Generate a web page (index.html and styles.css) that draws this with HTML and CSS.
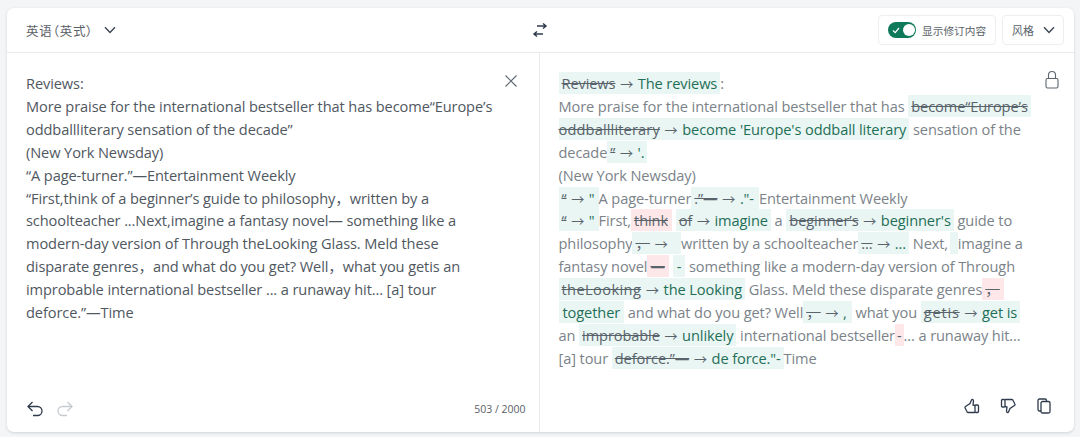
FILE: index.html
```html
<!DOCTYPE html>
<html lang="zh">
<head>
<meta charset="utf-8">
<title>修订</title>
<link rel="stylesheet" href="styles.css">
</head>
<body>
<main class="card">
  <header class="top">
    <div class="top-left">
      <span class="lang">英语（英式）</span>
      <svg class="chev" width="12" height="8" viewBox="0 0 12 8"><path d="M1 1.2 6 6.4 11 1.2" fill="none" stroke="#3c4654" stroke-width="1.4"/></svg>
    </div>
    <div class="top-mid">
      <svg width="16" height="16" viewBox="0 0 16 16" fill="none" stroke="#2f3b4c" stroke-width="1.5"><path d="M5 4h9M11 1.500 14 4 11 6.500"/><path d="M11 12H2M5 9.500 2 12 5 14.500"/></svg>
    </div>
    <div class="top-right">
      <div class="btn toggle-btn">
        <span class="toggle"><svg class="tick" width="8" height="7" viewBox="0 0 8 7"><path d="M1 3.500 3.200 5.600 7 1" fill="none" stroke="#fff" stroke-width="1.200"/></svg><span class="knob"></span></span>
        <span class="btn-label">显示修订内容</span>
      </div>
      <div class="btn style-btn">
        <span class="btn-label big">风格</span>
        <svg class="chev2" width="12" height="8" viewBox="0 0 12 8"><path d="M1 1.200 6 6.400 11 1.200" fill="none" stroke="#3c4654" stroke-width="1.400"/></svg>
      </div>
    </div>
  </header>
  <div class="panes">
    <section class="pane left">
      <div class="text">
        <div>Reviews:</div>
        <div>More praise for the international bestseller that has become“Europe’s</div>
        <div>oddballliterary sensation of the decade”</div>
        <div>(New York Newsday)</div>
        <div>“A page-turner.”—Entertainment Weekly</div>
        <div>“First,think of a beginner’s guide to philosophy，written by a</div>
        <div>schoolteacher ...Next,imagine a fantasy novel— something like a</div>
        <div>modern-day version of Through theLooking Glass. Meld these</div>
        <div>disparate genres，and what do you get? Well，what you getis an</div>
        <div>improbable international bestseller ... a runaway hit... [a] tour</div>
        <div>deforce.”—Time</div>
      </div>
      <svg class="close" width="14" height="14" viewBox="0 0 14 14"><path d="M1.500 1.500 12.500 12.500M12.500 1.500 1.500 12.500" fill="none" stroke="#5d6670" stroke-width="1.100"/></svg>
      <footer class="foot">
        <div class="icons">
          <svg width="18" height="18" viewBox="0 0 18 18" fill="none" stroke="#2f3b4c" stroke-width="1.300"><path d="M6.500 2 2 6.500 6.500 11"/><path d="M2 6.500H11.500a4.500 4.500 0 0 1 0 9H7"/></svg>
          <svg width="18" height="18" viewBox="0 0 18 18" fill="none" stroke="#c6cacf" stroke-width="1.300"><path d="M11.500 2 16 6.500 11.500 11"/><path d="M16 6.500H6.500a4.500 4.500 0 0 0 0 9H11"/></svg>
        </div>
        <span class="count">503 / 2000</span>
      </footer>
    </section>
    <section class="pane right">
      <div class="text grey">
        <div><span class="ins"><s>Reviews</s> <a>→</a> <b>The reviews</b></span>:</div>
        <div>More praise for the international bestseller that has <span class="ins"><s>become“Europe’s</s></span></div>
        <div><span class="ins tight"><s class="wide">oddballliterary</s> <a>→</a> <b>become 'Europe's oddball literary</b></span> sensation of the</div>
        <div>decade<span class="ins sm"><s>”</s> <a>→</a> <b>'.</b></span></div>
        <div>(New York Newsday)</div>
        <div><span class="ins q"><s>“</s> <a>→</a> <b>"</b></span>A page-turner<span class="ins sm pad"><s>.”—</s> <a>→</a> <b>."-</b></span>Entertainment Weekly</div>
        <div><span class="ins q"><s>“</s> <a>→</a> <b>"</b></span>First,<span class="del"><s>think</s></span> <span class="ins"><s>of</s> <a>→</a> <b>imagine</b></span> a <span class="ins"><s>beginner’s</s> <a>→</a> <b>beginner's</b></span> guide to</div>
        <div>philosophy<span class="ins sm pad"><s>，</s> <a>→</a> &nbsp;</span>written by a schoolteacher<span class="ins sm"><s>...</s> <a>→</a> <b>...</b></span> Next,<span class="ins empty">&nbsp;</span>imagine a</div>
        <div>fantasy novel<span class="del"><s>—</s></span> <span class="ins dash"><b>-</b></span> something like a modern-day version of Through</div>
        <div><span class="ins"><s class="wider">theLooking</s> <a>→</a> <b>the Looking</b></span> Glass. Meld these disparate genres<span class="del"><s>，</s></span></div>
        <div><span class="ins dash"><b>together</b></span> and what do you get? Well<span class="ins sm pad"><s>，</s> <a>→</a> <b>,</b></span> what you <span class="ins"><s class="widest">getis</s> <a>→</a> <b>get is</b></span></div>
        <div>an <span class="ins"><s>improbable</s> <a>→</a> <b>unlikely</b></span> international bestseller<span class="del plain">-</span>... a runaway hit...</div>
        <div>[a] tour <span class="ins"><s>deforce.”—</s> <a>→</a> <b>de force."-</b></span>Time</div>
      </div>
      <svg class="lock" width="16" height="20" viewBox="0 0 16 20" fill="none" stroke="#5d6670" stroke-width="1.100"><rect x="2" y="8.500" width="12" height="9.500" rx="1.500"/><path d="M4.500 8.500V5a3.500 3.500 0 0 1 7 0v3.500"/></svg>
      <footer class="foot end">
        <div class="icons wide">
          <svg width="18" height="18" viewBox="0 0 18 18" fill="none" stroke="#2f3b4c" stroke-width="1.300"><path d="M12 8.500 10 8l.5-4c.1-1.500-1.500-2-2-1L7 6.500 2.500 9.500c-.6.400-.7 1-.4 1.500l2 3.800c.3.500.7.700 1.200.700H12"/><rect x="12" y="8" width="3.500" height="7.500" rx="1"/></svg>
          <svg width="18" height="18" viewBox="0 0 18 18" fill="none" stroke="#2f3b4c" stroke-width="1.300"><g transform="rotate(180 9 9)"><path d="M12 8.500 10 8l.5-4c.1-1.500-1.500-2-2-1L7 6.500 2.500 9.500c-.6.400-.7 1-.4 1.500l2 3.800c.3.500.7.700 1.200.700H12"/><rect x="12" y="8" width="3.500" height="7.500" rx="1"/></g></svg>
          <svg width="18" height="18" viewBox="0 0 18 18" fill="none" stroke="#2f3b4c" stroke-width="1.300"><rect x="6" y="4.500" width="9" height="11.500" rx="1.500"/><path d="M6 14H4.500C3.700 14 3 13.300 3 12.500V3.500C3 2.700 3.700 2 4.500 2h5.500c.8 0 1.500.7 1.500 1.500v1"/></svg>
        </div>
      </footer>
    </section>
  </div>
</main>
</body>
</html>
```

FILE: styles.css
```css
* { box-sizing: border-box; }
html, body { margin: 0; height: 100%; }
body {
  background: #f3f5f6;
  padding: 8px 6px 5px 7px;
  font-family: "Open Sans", "Noto Sans CJK SC", sans-serif;
  color: #50585f;
  overflow: hidden;
}
.card {
  height: 424px;
  background: #fff;
  border-radius: 7px;
  box-shadow: 0 1px 3px rgba(30, 40, 60, .16);
  display: flex;
  flex-direction: column;
}
.top {
  height: 45px;
  flex: none;
  border-bottom: 1px solid #e8eaec;
  display: grid;
  grid-template-columns: 1fr auto 1fr;
  align-items: center;
  padding: 0 10px 0 19px;
}
.top-left { display: flex; align-items: center; gap: 11px; }
.lang { font: 12.500px "Noto Sans CJK SC", sans-serif; font-feature-settings: "palt"; letter-spacing: .8px; color: #5a6168; }
.chev { margin-top: -1px; }
.top-mid { display: flex; width: 16px; margin-right: 11px; }
.top-right { display: flex; justify-content: flex-end; gap: 6px; }
.btn {
  height: 30px;
  border: 1px solid #eceef0;
  border-radius: 4px;
  display: flex;
  align-items: center;
}
.toggle-btn { padding: 0 9px; gap: 6px; width: 118px; }
.style-btn { padding: 0 10px 0 9px; gap: 9px; width: 62px; }
.chev2 { flex: none; }
.btn-label { font: 10.700px "Noto Sans CJK SC", sans-serif; color: #5a6168; white-space: nowrap; }
.btn-label.big { font-size: 11px; }
.toggle {
  width: 28px;
  height: 16px;
  border-radius: 8px;
  background: #0f7a5a;
  display: flex;
  align-items: center;
  justify-content: space-between;
  padding: 0 1.500px 0 4px;
  flex: none;
}
.knob { width: 12px; height: 12px; border-radius: 50%; background: #fff; }
.panes { flex: 1; display: flex; min-height: 0; }
.pane { width: 50%; position: relative; display: flex; flex-direction: column; }
.pane.left { width: 532.500px; border-right: 1px solid #e8eaec; padding: 19.400px 12px 0 19px; }
.pane.right { flex: 1; width: auto; padding: 19.400px 12px 0 19px; }
.text {
  flex: 1;
  font-size: 14.600px;
  line-height: 22.850px;
  white-space: nowrap;
  letter-spacing: -.1px;
}
.text > div { height: 22.850px; }
.text.grey { color: #7b8389; }
.close { position: absolute; top: 21px; right: 21px; }
.lock { position: absolute; top: 17px; right: 14px; }
.foot { display: flex; align-items: center; justify-content: space-between; height: 45.600px; flex: none; }
.foot.end { justify-content: flex-end; padding-bottom: 6px; }
.icons { display: flex; gap: 12px; }
.icons.wide { gap: 18px; margin-right: 9px; }
.count { font-size: 10.500px; color: #5a6168; margin-right: 1px; }
.ins { background: #eaf6f3; padding: 1px 3px; }
.ins.tight { padding-left: 0; padding-right: 3px; }
.ins.q { padding: 1px 4px 1px 3px; }
.ins.sm { padding: 1px 3px; }
.ins.pad { padding-right: 5px; }
.ins.dash { padding: 1px 4px; }
.ins.empty { padding: 1px 2px; margin-left: 2px; }
.del { background: #fde7e8; padding: 1px 4px 1px 3px; }
.del.plain { color: #55606a; padding: 1px 2px; }
s { color: #59636b; text-decoration-thickness: 1px; }
s.wide { letter-spacing: .15px; }
s.wider { letter-spacing: .4px; }
s.widest { letter-spacing: .8px; }
b { font-weight: 400; color: #1f6f58; }
a { color: #59636b; font-size: 13px; margin: 0 1px; }
```
